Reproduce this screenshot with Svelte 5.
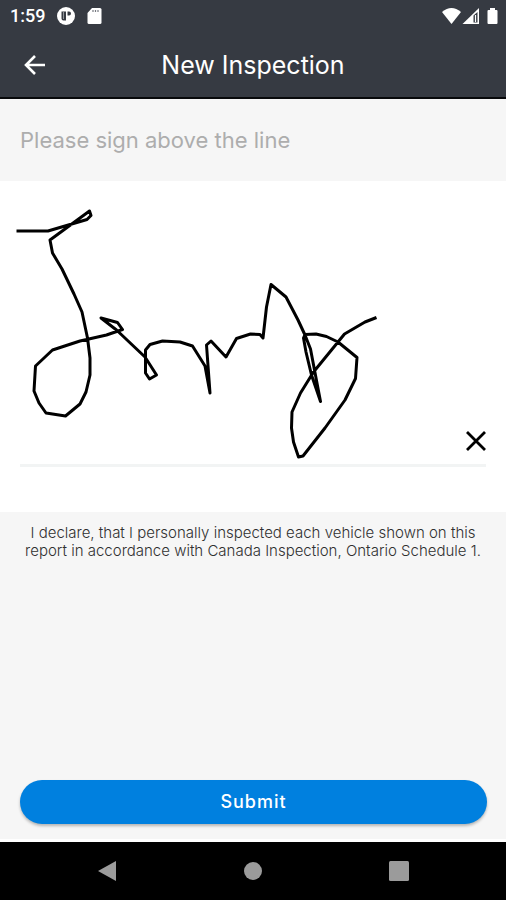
<script>
  let signed = $state(true);
</script>

<div class="screen">
  <header>
    <div class="status">
      <span class="time">1:59</span>
      <svg class="glyph" width="18" height="18" viewBox="0 0 18 18" aria-hidden="true">
        <circle cx="9" cy="9" r="9" fill="#fff" />
        <path d="M4.500 4.500h4.500v9H6.500a2 2 0 0 1-2-2zM10.500 4.500h1.500a2 2 0 0 1 0 4h-1.500z" fill="#363a42" />
        <path d="M6.500 5v7" stroke="#aaadb2" stroke-width="0.800" />
      </svg>
      <svg class="glyph" width="15" height="18" viewBox="0 0 15 18" aria-hidden="true">
        <path d="M5 1h8a1.500 1.500 0 0 1 1.500 1.500v13a1.500 1.500 0 0 1-1.500 1.500H2A1.500 1.500 0 0 1 .5 15.500V6z" fill="#fff" />
        <path d="M6 3v2M8.500 3v2M11 3v2" stroke="#777b82" stroke-width="1.200" />
      </svg>
      <svg class="right" width="57" height="18" viewBox="0 0 57 18" aria-hidden="true">
        <path d="M1 5Q10.500 -3 20 5L10.500 17z" fill="#fff" />
        <path d="M21.500 17L38 1v16z" fill="#fff" />
        <path d="M32.500 8.500L36.500 5V15.500h-4z" fill="#363a42" />
        <path d="M34.500 8v7" stroke="#fff" stroke-width="1.200" />
        <path d="M49 1h5v2h1.500a1 1 0 0 1 1 1v12a1 1 0 0 1-1 1h-8a1 1 0 0 1-1-1V4a1 1 0 0 1 1-1H49z" fill="#fff" />
      </svg>
    </div>
    <div class="bar">
      <button class="icon" aria-label="Back">
        <svg width="22" height="20" viewBox="0 0 22 20" fill="none" stroke="#fff" stroke-width="2.600">
          <path d="M21 10H2M11 1L2 10l9 9" />
        </svg>
      </button>
      <h1>New Inspection</h1>
    </div>
  </header>

  <main>
    <p class="prompt">Please sign above the line</p>
    <section class="pad" aria-label="Signature">
      <svg class="ink" viewBox="0 181 506 283" role="img" aria-label="Signature drawing">
        {#if signed}
          <path
            d="M16.500 231H48L87 219.500L91 215.500L89.500 211L50 240L52.500 253L62 269L74 294L82 312L87.500 338L90 358V375L86 392L80 404L65.500 416L46 413L39 403L34 391L35.500 366L52.500 350L80 341L106.500 335L122.500 329.500L117.500 322.500L101 318L116.500 330L145 357L156.500 375L149.500 379L145.500 373V350L150 344.500L162.500 341L180 342L192.500 346L205 366L210 393L206.500 345L211 341L226 357L236.500 338.500L250.500 334L260 334.500L263 338L266.500 307L271 284.500L286 297L298 320L305 335L310.500 349L320.500 401.500L311.500 375L306 352L303.500 338L305 334.500L316 334L326.500 336.500L338 342L357 357.500L355.500 378.500L345 400L325 428L303 456L298.500 457L293.500 442L291.500 428L292 412L300.500 393L313.500 372L338 342L344.500 334L365 322L376.500 317.500"
          />
        {/if}
      </svg>
      <button class="icon clear" aria-label="Clear signature" onclick={() => (signed = false)}>
        <svg width="20" height="20" viewBox="0 0 20 20" fill="none" stroke="#000" stroke-width="2.800">
          <path d="M1 1l18 18M19 1L1 19" />
        </svg>
      </button>
    </section>
    <p class="declare">
      I declare, that I personally inspected each vehicle shown on this report in accordance with
      Canada Inspection, Ontario Schedule 1.
    </p>
    <button class="submit">Submit</button>
  </main>

  <nav>
    <button class="icon" aria-label="Back">
      <svg width="20" height="22" viewBox="0 0 20 22"><path d="M19 1v20L1 11z" fill="#9b9b9b" /></svg>
    </button>
    <button class="icon" aria-label="Home">
      <svg width="20" height="20" viewBox="0 0 20 20"><circle cx="10" cy="10" r="9" fill="#9b9b9b" /></svg>
    </button>
    <button class="icon" aria-label="Recent apps">
      <svg width="20" height="20" viewBox="0 0 20 20"><rect width="20" height="20" rx="1.500" fill="#9b9b9b" /></svg>
    </button>
  </nav>
</div>

<style>
  :global(body) {
    margin: 0;
  }
  .screen {
    display: flex;
    flex-direction: column;
    min-height: 100vh;
    font-family: Inter, "Liberation Sans", sans-serif;
    background: #f6f6f6;
  }
  header {
    box-sizing: border-box;
    background: #363a42;
    color: #fff;
    border-bottom: 2px solid #08090b;
  }
  svg {
    display: block;
  }
  .status {
    display: flex;
    align-items: center;
    height: 32px;
    padding: 0 8px 0 10px;
  }
  .time {
    font: 500 18px/32px Roboto, sans-serif;
  }
  .glyph {
    margin-left: 12px;
  }
  .right {
    margin-left: auto;
  }
  .bar {
    display: grid;
    grid-template-columns: 48px 1fr 48px;
    align-items: center;
    height: 65px;
    padding: 0 11px;
  }
  .icon {
    display: grid;
    place-items: center;
    width: 48px;
    height: 48px;
    padding: 0;
    border: 0;
    background: none;
    cursor: pointer;
  }
  h1 {
    margin: 0;
    font-size: 25px;
    line-height: 32px;
    font-weight: 400;
    text-align: center;
  }
  main {
    flex: 1;
    display: flex;
    flex-direction: column;
    border-bottom: 3px solid #fff;
  }
  .prompt {
    margin: 0;
    padding: 25px 20px;
    font-size: 22px;
    line-height: 32px;
    color: #adadad;
  }
  .pad {
    position: relative;
    padding-bottom: 45px;
    background: #fff;
  }
  .pad::after {
    content: "";
    display: block;
    height: 3px;
    margin: 0 20px;
    background: #f2f4f4;
  }
  .ink {
    width: 100%;
    fill: none;
    stroke: #000;
    stroke-width: 3;
    stroke-linejoin: round;
  }
  .clear {
    position: absolute;
    right: 6px;
    bottom: 47px;
  }
  .declare {
    margin: 0;
    padding: 12px 20px;
    font-size: 15px;
    font-weight: 300;
    line-height: 18px;
    text-align: center;
    color: #303030;
  }
  .submit {
    height: 44px;
    margin: auto 19px 15px 20px;
    border: 0;
    border-radius: 22px;
    background: #0080df;
    box-shadow: 0 2px 3px #0004;
    color: #fff;
    font: 500 18px/24px Inter, sans-serif;
    letter-spacing: 1px;
    cursor: pointer;
  }
  nav {
    display: flex;
    justify-content: space-between;
    align-items: center;
    height: 58px;
    padding: 0 83px;
    background: #000;
  }
</style>
